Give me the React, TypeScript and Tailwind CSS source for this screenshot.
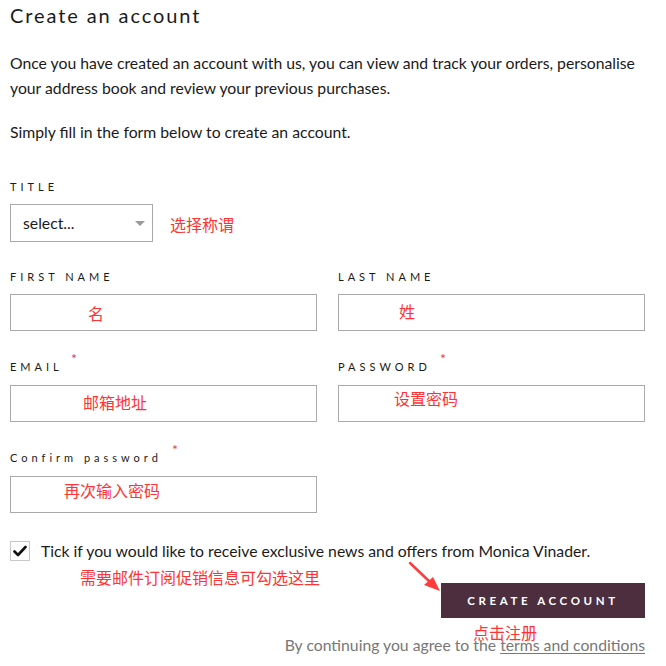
import React from "react";

const font = { fontFamily: "Lato, 'Noto Sans CJK SC', sans-serif" };

function Label({ children, required, starClass }: { children: React.ReactNode; required?: boolean; starClass?: string }) {
  return (
    <div className="relative h-[12px] text-[11px] leading-[12px] tracking-[4px] text-[#1a1a1a] uppercase">
      {children}
      {required && (
        <span className={`absolute top-[-8px] text-[14px] text-[#d0465f] tracking-normal ${starClass}`}>*</span>
      )}
    </div>
  );
}

function Field({ note, noteClass }: { note: string; noteClass: string }) {
  return (
    <div className="h-[37px] border border-[#aaaaaa] bg-white relative">
      <span className={`absolute text-[16px] leading-[16px] text-[#ff3333] ${noteClass}`}>{note}</span>
    </div>
  );
}

export default function App() {
  return (
    <div className="relative w-[666px] h-[666px] bg-white overflow-hidden text-[#1a1a1a]" style={font}>
      <div className="pl-[10px] pr-[21px]">
        <h1 className="pt-[3px] text-[20px] leading-[24px] tracking-[1.9px] font-normal">Create an account</h1>

        <p className="mt-[23px] text-[15.75px] leading-[25px]">
          Once you have created an account with us, you can view and track your orders, personalise your address book and review your previous purchases.
        </p>
        <p className="mt-[19px] text-[15.75px] leading-[25px]">Simply fill in the form below to create an account.</p>

        <div className="mt-[37px]">
          <Label>Title</Label>
          <div className="mt-[11px] flex items-center">
            <div className="w-[143px] h-[38px] border border-[#aaaaaa] flex items-center justify-between pl-[12px] pr-[7px]">
              <span className="text-[15.75px]">select...</span>
              <span className="w-0 h-0 border-l-[5px] border-r-[5px] border-t-[5px] border-l-transparent border-r-transparent border-t-[#9a9a9a] mt-[1px]" />
            </div>
            <span className="ml-[17px] mt-[4px] text-[16px] text-[#ff3333]">选择称谓</span>
          </div>
        </div>

        <div className="mt-[29px] grid grid-cols-2 gap-x-[21px]">
          <div>
            <Label>First name</Label>
            <div className="mt-[11px]"><Field note="名" noteClass="left-[77px] top-[11px]" /></div>
          </div>
          <div>
            <Label>Last name</Label>
            <div className="mt-[11px]"><Field note="姓" noteClass="left-[60px] top-[9px]" /></div>
          </div>

          <div className="mt-[30px]">
            <Label required starClass="left-[61px]">Email</Label>
            <div className="mt-[12px]"><Field note="邮箱地址" noteClass="left-[72px] top-[9px]" /></div>
          </div>
          <div className="mt-[30px]">
            <Label required starClass="left-[102px]">Password</Label>
            <div className="mt-[12px]"><Field note="设置密码" noteClass="left-[55px] top-[5px]" /></div>
          </div>

          <div className="mt-[30px]">
            <div className="relative h-[12px] text-[11px] leading-[12px] tracking-[4px] text-[#1a1a1a]">
              Confirm password
              <span className="absolute left-[162px] top-[-8px] text-[14px] text-[#d0465f] tracking-normal">*</span>
            </div>
            <div className="mt-[12px]"><Field note="再次输入密码" noteClass="left-[53px] top-[6px]" /></div>
          </div>
        </div>

        <div className="mt-[28px] flex items-start">
          <div className="w-[20px] h-[20px] border border-[#c8c8c8] flex items-center justify-center shrink-0">
            <svg width="14" height="12" viewBox="0 0 14 12">
              <path d="M1.5 6.5 L5 10 L12.5 2" fill="none" stroke="#111" strokeWidth="2.6" strokeLinecap="round" strokeLinejoin="round" />
            </svg>
          </div>
          <span className="ml-[11px] text-[15.75px] leading-[20px]">
            Tick if you would like to receive exclusive news and offers from Monica Vinader.
          </span>
        </div>
        <div className="ml-[70px] mt-[7px] text-[16px] leading-[20px] text-[#ff3333]">需要邮件订阅促销信息可勾选这里</div>

        <div className="flex justify-end mt-[-5px]">
          <button className="w-[204px] h-[35px] bg-[#4d2e3e] text-white text-[11.5px] tracking-[3.6px] font-bold uppercase">
            Create account
          </button>
        </div>

        <div className="relative flex justify-end mt-[17px] text-[15.75px] leading-[20px] text-[#777777]">
          <span>
            By continuing you agree to the <span className="underline underline-offset-2">terms and conditions</span>
          </span>
          <span className="absolute right-[108px] top-[-12px] text-[16px] text-[#ff3333]">点击注册</span>
        </div>
      </div>

      <svg className="absolute left-[405px] top-[558px]" width="40" height="36" viewBox="0 0 40 36">
        <path d="M5 5 L25 24" stroke="#ff3b3b" strokeWidth="2.5" strokeLinecap="round" />
        <path d="M35 33 L19 27 L28 19 Z" fill="#ff3b3b" />
      </svg>
    </div>
  );
}
